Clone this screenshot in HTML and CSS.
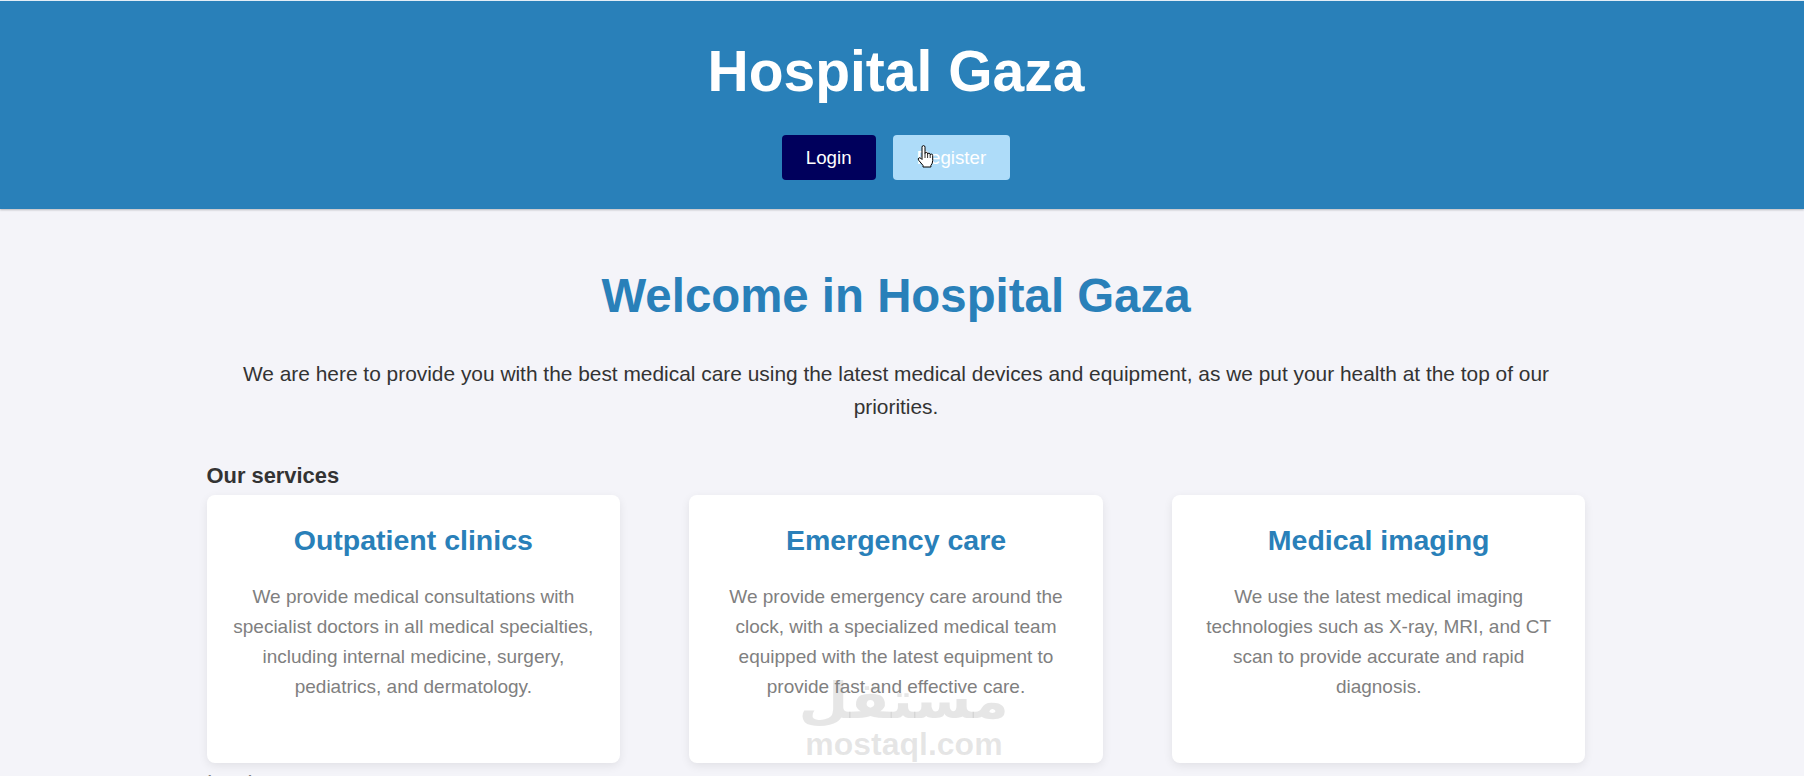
FILE: index.html
```html
<!DOCTYPE html>
<html lang="en">
<head>
  <meta charset="UTF-8" />
  <meta name="viewport" content="width=device-width, initial-scale=1.0"/>
  <title>Hospital Gaza</title>
  <link rel="stylesheet" href="styles.css">
</head>
<body>

  <header class="site-header">
    <h1 class="site-title">Hospital Gaza</h1>
    <nav class="auth">
      <button class="btn btn-login">Login</button>
      <button class="btn btn-register">Register</button>
      <svg class="pointer" viewBox="0 0 17 23" width="17" height="23">
        <path d="M5 2.2 Q5 0.6 6.5 0.6 Q8 0.6 8 2.2 V8.6 Q8 7.4 9.3 7.4 Q10.6 7.4 10.6 8.8 V9.4 Q10.6 8.2 11.9 8.2 Q13.2 8.2 13.2 9.6 V10.2 Q13.2 9.1 14.4 9.1 Q15.7 9.1 15.7 10.6 V15.6 Q15.7 18.4 13.9 20.4 V22 H6 V20.4 L1.6 15.2 Q0.6 13.8 1.8 13 Q2.9 12.3 4 13.4 L5 14.5 Z"
              fill="#fff" stroke="#000" stroke-width="1" stroke-linejoin="round"/>
        <path d="M8 8.6 V13 M10.6 9.4 V13 M13.2 10.2 V13" stroke="#000" stroke-width="0.8" fill="none"/>
      </svg>
    </nav>
  </header>

  <div class="page">
    <main class="content">
      <h2 class="welcome">Welcome in Hospital Gaza</h2>
      <p class="intro">We are here to provide you with the best medical care using the latest medical devices and equipment, as we put your health at the top of our priorities.</p>

      <section class="services">
        <h3 class="section-title">Our services</h3>
        <div class="service-grid">
          <div class="service-card">
            <h3>Outpatient clinics</h3>
            <p>We provide medical consultations with specialist doctors in all medical specialties, including internal medicine, surgery, pediatrics, and dermatology.</p>
          </div>
          <div class="service-card">
            <h3>Emergency care</h3>
            <p>We provide emergency care around the clock, with a specialized medical team equipped with the latest equipment to provide fast and effective care.</p>
          </div>
          <div class="service-card">
            <h3>Medical imaging</h3>
            <p>We use the latest medical imaging technologies such as X-ray, MRI, and CT scan to provide accurate and rapid diagnosis.</p>
          </div>

          <div class="watermark">
            <span class="watermark-ar">مستقل</span>
            <span class="watermark-en">mostaql.com</span>
          </div>
        </div>
      </section>

      <section class="why">
        <h3>Why choose us</h3>
        <ul>
          <li>Qualified doctors with long experience</li>
          <li>Modern medical devices and equipment</li>
          <li>Emergency service available 24 hours a day</li>
          <li>Comfortable rooms and continuous care</li>
        </ul>
      </section>
    </main>

    <footer class="site-footer">
      &copy; Hospital Gaza. All rights reserved.
    </footer>
  </div>

</body>
</html>
```

FILE: styles.css
```css
:root {
  --blue: #2980b9;
  --navy: #00005c;
  --sky: #aedcf9;
  --bg: #f4f4f9;
  --text: #333;
  --muted: #7f8080;
}

* {
  box-sizing: border-box;
}

body {
  margin: 0;
  font-family: "Liberation Sans", Arial, sans-serif;
  background: var(--bg);
  color: var(--text);
}

::-webkit-scrollbar {
  width: 4px;
}

::-webkit-scrollbar-track {
  background: #efefef;
}

::-webkit-scrollbar-thumb {
  background: #c3c3c3;
}

/* header */

.site-header {
  background: var(--blue);
  border-top: 1px solid #e3edf6;
  padding: 38px 12px 29px 0;
  text-align: center;
  box-shadow: 0 1px 2px rgba(0,0,0,0.25);
}

.site-title {
  margin: 0 0 32px;
  font-size: 57px;
  line-height: 64px;
  color: #fff;
}

.auth {
  position: relative;
  display: inline-flex;
  gap: 17px;
}

.btn {
  font-family: inherit;
  font-size: 18.7px;
  line-height: 21px;
  padding: 12px 24px;
  border: none;
  border-radius: 4px;
  color: #fff;
  cursor: pointer;
}

.btn-login {
  background: var(--navy);
}

.btn-register {
  background: var(--sky);
}

.pointer {
  position: absolute;
  left: 135px;
  top: 10px;
}

/* main */

.page {
  padding-right: 12px;
}

.content {
  max-width: 1379px;
  margin: 0 auto;
  text-align: center;
}

.welcome {
  margin: 0;
  padding-top: 59px;
  font-size: 47.4px;
  line-height: 56px;
  color: var(--blue);
}

.intro {
  margin: 33px 0 0;
  font-size: 20.9px;
  line-height: 1.6;
}

.services {
  text-align: left;
}

.section-title {
  margin: 39px 0 6px;
  font-size: 21.9px;
  line-height: 26px;
}

.service-grid {
  position: relative;
  display: grid;
  grid-template-columns: repeat(3, 1fr);
  gap: 69px;
}

.service-card {
  background: #fff;
  border-radius: 8px;
  box-shadow: 0 3px 10px rgba(0,0,0,0.08);
  padding: 20px 20px 61px;
  text-align: center;
}

.service-card h3 {
  margin: 8px 0 25px;
  font-size: 28.5px;
  line-height: 34px;
  color: var(--blue);
}

.service-card p {
  margin: 0;
  font-size: 19px;
  line-height: 30px;
  color: var(--muted);
}

.watermark {
  position: absolute;
  left: 50%;
  top: 180px;
  transform: translateX(-46%);
  display: flex;
  flex-direction: column;
  align-items: center;
  color: rgba(140,140,140,0.22);
  font-weight: bold;
  pointer-events: none;
}

.watermark-ar {
  font-family: "DejaVu Sans", sans-serif;
  font-size: 50px;
  line-height: 52px;
  transform: scaleX(1.15);
}

.watermark-en {
  font-size: 32px;
  line-height: 34px;
}

.why {
  text-align: left;
  margin-left: -20px;
}

.why h3 {
  margin: 8px 0 10px;
  font-size: 22px;
  line-height: 26px;
  font-weight: normal;
  color: #808080;
}

.why ul {
  margin: 0;
  padding-left: 40px;
  font-size: 19px;
  line-height: 1.8;
  color: var(--muted);
}

.site-footer {
  margin-top: 60px;
  padding: 24px;
  text-align: center;
  background: var(--blue);
  color: #fff;
  font-size: 16px;
}
```
